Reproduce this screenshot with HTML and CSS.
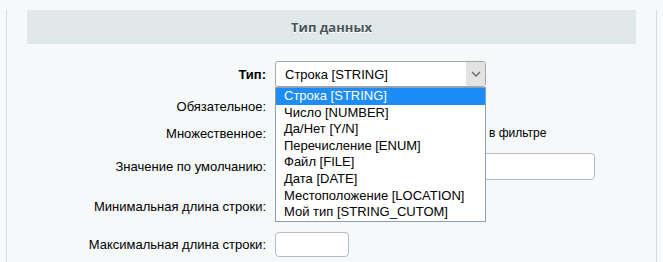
FILE: index.html
```html
<!DOCTYPE html>
<html lang="ru">
<head>
    <meta charset="UTF-8">
    <meta name="viewport" content="width=device-width, initial-scale=1.0">
    <title>Тип данных</title>
    <link rel="stylesheet" href="styles.css">
</head>
<body>
    <div class="panel">
        <div class="heading">Тип данных</div>

        <div class="form">
            <div class="row row-type">
                <label class="label label-bold" for="type">Тип:</label>
                <div class="field">
                    <div class="select" id="type">
                        <span class="select-value">Строка [STRING]</span>
                        <span class="select-arrow">
                            <svg width="10" height="6" viewBox="0 0 10 6"><path d="M1 1 L5 5 L9 1" fill="none" stroke="#6b6b6b" stroke-width="1.4"/></svg>
                        </span>
                        <ul class="dropdown">
                            <li class="active">Строка [STRING]</li>
                            <li>Число [NUMBER]</li>
                            <li>Да/Нет [Y/N]</li>
                            <li>Перечисление [ENUM]</li>
                            <li>Файл [FILE]</li>
                            <li>Дата [DATE]</li>
                            <li>Местоположение [LOCATION]</li>
                            <li>Мой тип [STRING_CUTOM]</li>
                        </ul>
                    </div>
                </div>
            </div>

            <div class="row row-required">
                <label class="label">Обязательное:</label>
                <div class="field"><input type="checkbox" class="check"></div>
            </div>

            <div class="row row-multiple">
                <label class="label">Множественное:</label>
                <div class="field">
                    <input type="checkbox" class="check">
                    <span class="note">в фильтре</span>
                </div>
            </div>

            <div class="row row-default">
                <label class="label">Значение по умолчанию:</label>
                <div class="field"><input type="text" class="input input-wide"></div>
            </div>

            <div class="row row-min">
                <label class="label">Минимальная длина строки:</label>
                <div class="field"><input type="text" class="input input-short"></div>
            </div>

            <div class="row row-max">
                <label class="label">Максимальная длина строки:</label>
                <div class="field"><input type="text" class="input input-short"></div>
            </div>
        </div>
    </div>
</body>
</html>
```

FILE: styles.css
```css
* {
    box-sizing: border-box;
}

body {
    margin: 0;
    background-color: #f5f9f9;
    font-family: "Liberation Sans", Arial, sans-serif;
    font-size: 13px;
    color: #000;
    overflow: hidden;
}

.panel {
    width: 651px;
    height: 262px;
    margin-left: 6px;
    padding: 0 20px;
    background-color: #f5f9f9;
    border-left: 1px solid #d3dcde;
    border-right: 1px solid #d3dcde;
}

.heading {
    margin-top: 10px;
    height: 34px;
    display: flex;
    align-items: center;
    justify-content: center;
    background-color: #e0e8ea;
    color: #4b5659;
    font-family: "Open Sans", sans-serif;
    font-size: 13px;
    font-weight: bold;
    text-shadow: 0 1px #fff;
}

.form {
    margin-top: 13px;
}

.row {
    display: grid;
    grid-template-columns: 239px 1fr;
    column-gap: 9px;
    align-items: center;
}

.row-type { height: 34px; }
.row-required { height: 30px; }
.row-multiple { height: 24px; }
.row-default { height: 42px; }
.row-min { height: 38px; }
.row-max { height: 39px; }

.label {
    text-align: right;
}

.label-bold {
    font-weight: bold;
}

.field {
    display: flex;
    align-items: center;
}

.check {
    margin: 0 4px 0 0;
    width: 13px;
    height: 13px;
}

/* the start of this caption is hidden under the open dropdown */
.note {
    font-size: 12px;
    margin-left: 197px;
}

.select {
    position: relative;
    width: 211px;
    height: 26px;
    display: flex;
    align-items: center;
    padding-left: 9px;
    background-color: #fff;
    border: 1px solid #a6a6a6;
    border-radius: 3px;
}

.select-value {
    flex: 1;
}

.select-arrow {
    width: 19px;
    height: 24px;
    display: flex;
    align-items: center;
    justify-content: center;
    background-color: #e3e3e3;
}

.dropdown {
    position: absolute;
    top: 25px;
    left: -1px;
    width: 211px;
    margin: 0;
    padding: 0;
    list-style: none;
    background-color: #fff;
    border: 1px solid #8a9eb8;
    z-index: 10;
}

.dropdown li {
    height: 16.6px;
    line-height: 16.6px;
    padding-left: 8px;
    white-space: nowrap;
}

.dropdown li.active {
    background-color: #1e8cf5;
    color: #fff;
}

.input {
    height: 27px;
    padding: 0 6px;
    background-color: #fff;
    border: 1px solid #b4bcc2;
    border-radius: 4px;
    font-family: inherit;
    font-size: 13px;
}

.input-wide {
    width: 320px;
}

.input-short {
    width: 74px;
    height: 25px;
}
```
